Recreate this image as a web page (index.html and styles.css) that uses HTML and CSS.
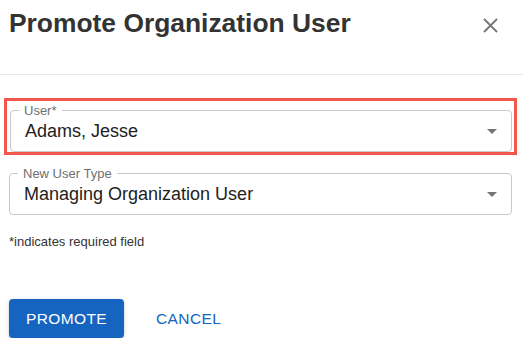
FILE: index.html
```html
<!DOCTYPE html>
<html lang="en">
<head>
    <meta charset="UTF-8">
    <meta name="viewport" content="width=device-width, initial-scale=1.0">
    <title>Promote Organization User</title>
    <link rel="stylesheet" href="styles.css">
</head>
<body>
    <div class="dialog">
        <div class="dialog-header">
            <h1>Promote Organization User</h1>
            <button class="close-btn" aria-label="Close">
                <svg width="15" height="15" viewBox="0 0 15 15">
                    <path d="M1 1 L14 14 M14 1 L1 14" stroke="#757575" stroke-width="1.8" fill="none"/>
                </svg>
            </button>
        </div>

        <div class="dialog-body">
            <div class="highlight">
                <div class="field">
                    <span class="field-label">User*</span>
                    <span class="field-value">Adams, Jesse</span>
                    <span class="arrow"></span>
                </div>
            </div>

            <div class="field field-second">
                <span class="field-label">New User Type</span>
                <span class="field-value">Managing Organization User</span>
                <span class="arrow"></span>
            </div>

            <p class="required-note">*indicates required field</p>

            <div class="actions">
                <button class="btn-primary">PROMOTE</button>
                <button class="btn-text">CANCEL</button>
            </div>
        </div>
    </div>
</body>
</html>
```

FILE: styles.css
```css
body {
    margin: 0;
    background-color: #ffffff;
    font-family: "Liberation Sans", Arial, sans-serif;
    color: #222222;
}
.dialog-header {
    display: flex;
    justify-content: space-between;
    align-items: flex-start;
    height: 66px;
    padding: 8px 25px 0 9px;
    border-bottom: 1px solid #e6e6e6;
}
h1 {
    margin: 0;
    font-size: 26.4px;
    line-height: 30px;
    font-weight: bold;
    color: #333333;
}
.close-btn {
    margin-top: 10px;
    padding: 0;
    border: none;
    background: none;
    width: 15px;
    height: 15px;
    cursor: pointer;
}
.close-btn svg {
    display: block;
}
.dialog-body {
    padding-top: 23px;
}
.highlight {
    margin-left: 4px;
    width: 502px;
    padding: 9px 2px 0 3px;
    border: 3px solid #f3574c;
}
.field {
    position: relative;
    box-sizing: border-box;
    display: flex;
    align-items: center;
    height: 42px;
    padding: 0 14px;
    border: 1px solid #c8c8c8;
    border-radius: 4px;
}
.field-second {
    margin: 18px 11px 0 9px;
}
.field-label {
    position: absolute;
    top: -8px;
    left: 8px;
    padding: 0 5px;
    background-color: #ffffff;
    font-size: 13px;
    line-height: 15px;
    color: #707070;
}
.field-value {
    font-size: 18px;
    color: #222222;
}
.arrow {
    margin-left: auto;
    width: 0;
    height: 0;
    border-left: 5.5px solid transparent;
    border-right: 5.5px solid transparent;
    border-top: 5px solid #757575;
}
.required-note {
    margin: 19px 0 0 9px;
    font-size: 13px;
    line-height: 15px;
    color: #333333;
}
.actions {
    display: flex;
    align-items: center;
    margin: 50px 0 0 9px;
}
.btn-primary {
    width: 115px;
    height: 39px;
    border: none;
    border-radius: 4px;
    background-color: #1565c0;
    color: white;
    font-family: inherit;
    font-size: 15.5px;
    letter-spacing: 0.4px;
    box-shadow: 0 3px 1px -2px rgba(0, 0, 0, 0.2), 0 2px 2px rgba(0, 0, 0, 0.14), 0 1px 5px rgba(0, 0, 0, 0.12);
    cursor: pointer;
}
.btn-text {
    height: 39px;
    margin-left: 16px;
    padding: 0 16px;
    border: none;
    background: none;
    color: #1565c0;
    font-family: inherit;
    font-size: 15.5px;
    letter-spacing: 0.4px;
    cursor: pointer;
}
```
